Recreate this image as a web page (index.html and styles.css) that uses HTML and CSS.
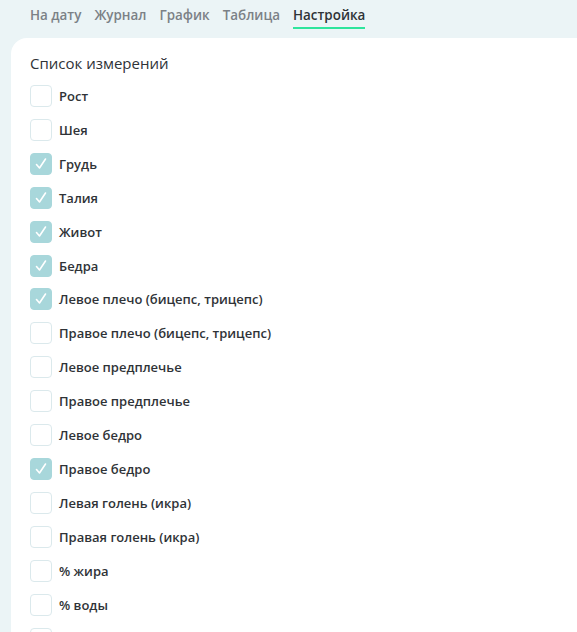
FILE: index.html
```html
<!DOCTYPE html>
<html lang="ru">
<head>
    <meta charset="UTF-8">
    <meta name="viewport" content="width=device-width, initial-scale=1.0">
    <title>Настройка измерений</title>
    <link rel="stylesheet" href="styles.css">
</head>
<body>
    <nav class="tabs">
        <a class="tab">На дату</a>
        <a class="tab">Журнал</a>
        <a class="tab">График</a>
        <a class="tab">Таблица</a>
        <a class="tab active">Настройка</a>
    </nav>

    <div class="card">
        <h2 class="card-title">Список измерений</h2>
        <ul class="measure-list" id="measureList"></ul>
    </div>

    <script>
    const measures = [
        ['Рост', false],
        ['Шея', false],
        ['Грудь', true],
        ['Талия', true],
        ['Живот', true],
        ['Бедра', true],
        ['Левое плечо (бицепс, трицепс)', true],
        ['Правое плечо (бицепс, трицепс)', false],
        ['Левое предплечье', false],
        ['Правое предплечье', false],
        ['Левое бедро', false],
        ['Правое бедро', true],
        ['Левая голень (икра)', false],
        ['Правая голень (икра)', false],
        ['% жира', false],
        ['% воды', false],
        ['% мышц', false]
    ];

    const list = document.getElementById('measureList');
    measures.forEach(([name, checked]) => {
        const item = document.createElement('li');
        item.className = 'measure-item';
        item.innerHTML = `
            <span class="checkbox ${checked ? 'checked' : ''}">
                <svg viewBox="0 0 22 22" width="22" height="22"><polyline points="6.5,11.5 9.5,15 15.5,6" /></svg>
            </span>
            <span class="measure-name">${name}</span>
        `;
        item.addEventListener('click', () => {
            item.querySelector('.checkbox').classList.toggle('checked');
        });
        list.appendChild(item);
    });
    </script>
</body>
</html>
```

FILE: styles.css
```css
:root {
    --bg: #ebf4f6;
    --text-primary: #2f3337;
    --text-muted: #7b8186;
    --accent: #2ee59d;
    --box-border: #dbe9ec;
    --box-checked: #a8d7db;
}

* {
    margin: 0;
    padding: 0;
    box-sizing: border-box;
}

body {
    background-color: var(--bg);
    font-family: 'Open Sans', 'Noto Sans', sans-serif;
    color: var(--text-primary);
    overflow: hidden;
}

.tabs {
    display: flex;
    gap: 13px;
    padding: 5px 0 0 30px;
    height: 38px;
}

.tab {
    font-size: 13.4px;
    font-weight: 600;
    color: var(--text-muted);
    height: 24px;
    line-height: 20px;
    border-bottom: 2px solid transparent;
    cursor: pointer;
}

.tab.active {
    color: var(--text-primary);
    border-bottom-color: var(--accent);
}

.card {
    margin-left: 11px;
    background-color: #fff;
    border-radius: 16px 0 0 0;
    padding: 14px 19px 0;
    min-height: 600px;
}

.card-title {
    font-size: 15px;
    font-weight: 400;
    line-height: 22px;
    margin-bottom: 5px;
}

.measure-list {
    list-style: none;
}

.measure-item {
    display: flex;
    align-items: center;
    gap: 7px;
    height: 33.93px;
    cursor: pointer;
}

.checkbox {
    width: 22px;
    height: 22px;
    border: 1px solid var(--box-border);
    border-radius: 4px;
    flex-shrink: 0;
    display: flex;
}

.checkbox svg {
    margin: -1px;
    display: none;
}

.checkbox polyline {
    fill: none;
    stroke: #fff;
    stroke-width: 1.6;
    stroke-linecap: round;
    stroke-linejoin: round;
}

.checkbox.checked {
    background-color: var(--box-checked);
    border-color: var(--box-checked);
}

.checkbox.checked svg {
    display: block;
}

.measure-name {
    font-size: 13px;
    font-weight: 600;
}
```
